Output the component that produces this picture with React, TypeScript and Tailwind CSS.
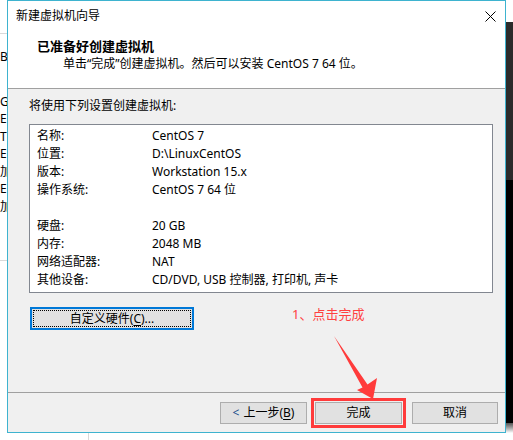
import React from 'react';

const font = "font-['Noto_Sans','Noto_Sans_CJK_SC',sans-serif]";

const rows: [string, string][] = [
  ['名称:', 'CentOS 7'],
  ['位置:', 'D:\\LinuxCentOS'],
  ['版本:', 'Workstation 15.x'],
  ['操作系统:', 'CentOS 7 64 位'],
  ['', ''],
  ['硬盘:', '20 GB'],
  ['内存:', '2048 MB'],
  ['网络适配器:', 'NAT'],
  ['其他设备:', 'CD/DVD, USB 控制器, 打印机, 声卡'],
];

const WinButton: React.FC<{ children: React.ReactNode; className?: string }> = ({ children, className = '' }) => (
  <button className={`h-[22px] bg-[#e1e1e1] border border-[#adadad] text-[12px] leading-none text-black flex items-center justify-center ${className}`}>
    {children}
  </button>
);

export default function App() {
  return (
    <div className={`w-[513px] h-[440px] relative overflow-hidden bg-white flex flex-col ${font} text-black`}>
      <div className="flex h-[433px]">
        {/* background window on the left */}
        <div className="w-[7px] flex flex-col text-[12px] leading-[17.5px] overflow-hidden">
          <div className="h-[33px] shrink-0" />
          <div className="h-px bg-[#d9d9d9] shrink-0" />
          <div className="h-[14px] shrink-0" />
          <div className="shrink-0">B</div>
          <div className="h-[27px] shrink-0" />
          <div className="shrink-0">G</div>
          <div className="shrink-0">E</div>
          <div className="shrink-0">T</div>
          <div className="shrink-0">E</div>
          <div className="shrink-0 whitespace-nowrap">加</div>
          <div className="shrink-0">E</div>
          <div className="shrink-0 whitespace-nowrap">加</div>
          <div className="h-[45px] shrink-0" />
          <div className="h-px bg-[#d9d9d9] shrink-0" />
        </div>

        {/* dialog */}
        <div className="w-[499px] h-[433px] border border-[#3eb3cf] flex flex-col">
          <div className="h-[87px] bg-white flex flex-col shrink-0">
            <div className="h-[30px] flex items-center justify-between pl-[8px] pr-[9px]">
              <span className="text-[12px] leading-none">新建虚拟机向导</span>
              <svg width="11" height="11" viewBox="0 0 11 11" className="mt-[1px]">
                <path d="M0.5 0.5 L10.5 10.5 M10.5 0.5 L0.5 10.5" stroke="#000" strokeWidth="1" />
              </svg>
            </div>
            <div className="pl-[29px] mt-[7px] text-[13px] font-bold leading-[17px]">已准备好创建虚拟机</div>
            <div className="pl-[55px] text-[12px] leading-[17px]">单击“完成”创建虚拟机。然后可以安装 CentOS 7 64 位。</div>
          </div>
          <div className="h-px bg-[#a0a0a0] shrink-0" />

          <div className="flex-1 bg-[#f0f0f0] pl-[21px] pt-[8px] flex flex-col">
            <div className="text-[12px] leading-[17px]">将使用下列设置创建虚拟机:</div>
            <div className="mt-[10px] w-[464px] h-[169px] bg-white border border-[#828790] pt-[2px] pl-[7px]">
              {rows.map(([k, v], i) => (
                <div key={i} className="flex h-[18px] items-center text-[12px] whitespace-nowrap">
                  <span className="w-[115px] shrink-0">{k}</span>
                  <span>{v}</span>
                </div>
              ))}
            </div>
            <button className="mt-[14px] ml-px w-[164px] h-[23px] border-2 border-[#0078d7] bg-[#e1e1e1] p-[1px]">
              <span className="w-full h-full flex items-center justify-center border border-dotted border-black text-[12px] leading-none">
                自定义硬件(<span className="underline underline-offset-2">C</span>)...
              </span>
            </button>
          </div>

          <div className="h-px bg-[#a0a0a0] shrink-0" />
          <div className="h-[39px] bg-[#f0f0f0] shrink-0 flex justify-end items-start pt-[9px] pr-[7px]">
            <WinButton className="w-[87px]">
              <span className="text-[#1a4f8a] mr-[4px]">&lt;</span>上一步(<span className="underline underline-offset-2">B</span>)
            </WinButton>
            <WinButton className="w-[87px] ml-[8px] outline-[3px] outline-solid outline-[#ff3b3b] outline-offset-[1px]">完成</WinButton>
            <WinButton className="w-[86px] ml-[10px]">取消</WinButton>
          </div>
        </div>

        {/* background on the right */}
        <div className="w-[7px] flex flex-col">
          <div className="h-[22px] bg-white shrink-0" />
          <div className="h-[158px] bg-[#2b2b2b] shrink-0" />
          <div className="flex-1 bg-black" />
          <div className="h-[10px] bg-gradient-to-b from-[#555] to-white shrink-0" />
        </div>
      </div>
      <div className="h-[7px] flex">
        <div className="w-[88px]" />
        <div className="w-px bg-[#d9d9d9]" />
      </div>

      {/* annotation */}
      <div className="absolute left-[292px] top-[306px] text-[13px] leading-[17px] text-[#ff4040]">1、点击完成</div>
      <svg className="absolute inset-0 pointer-events-none" width="513" height="440" viewBox="0 0 513 440">
        <polygon points="334,336 367.5,384.4 377,378 373,399 357,390 362.5,387.6" fill="#ff3b3b" />
      </svg>
    </div>
  );
}
